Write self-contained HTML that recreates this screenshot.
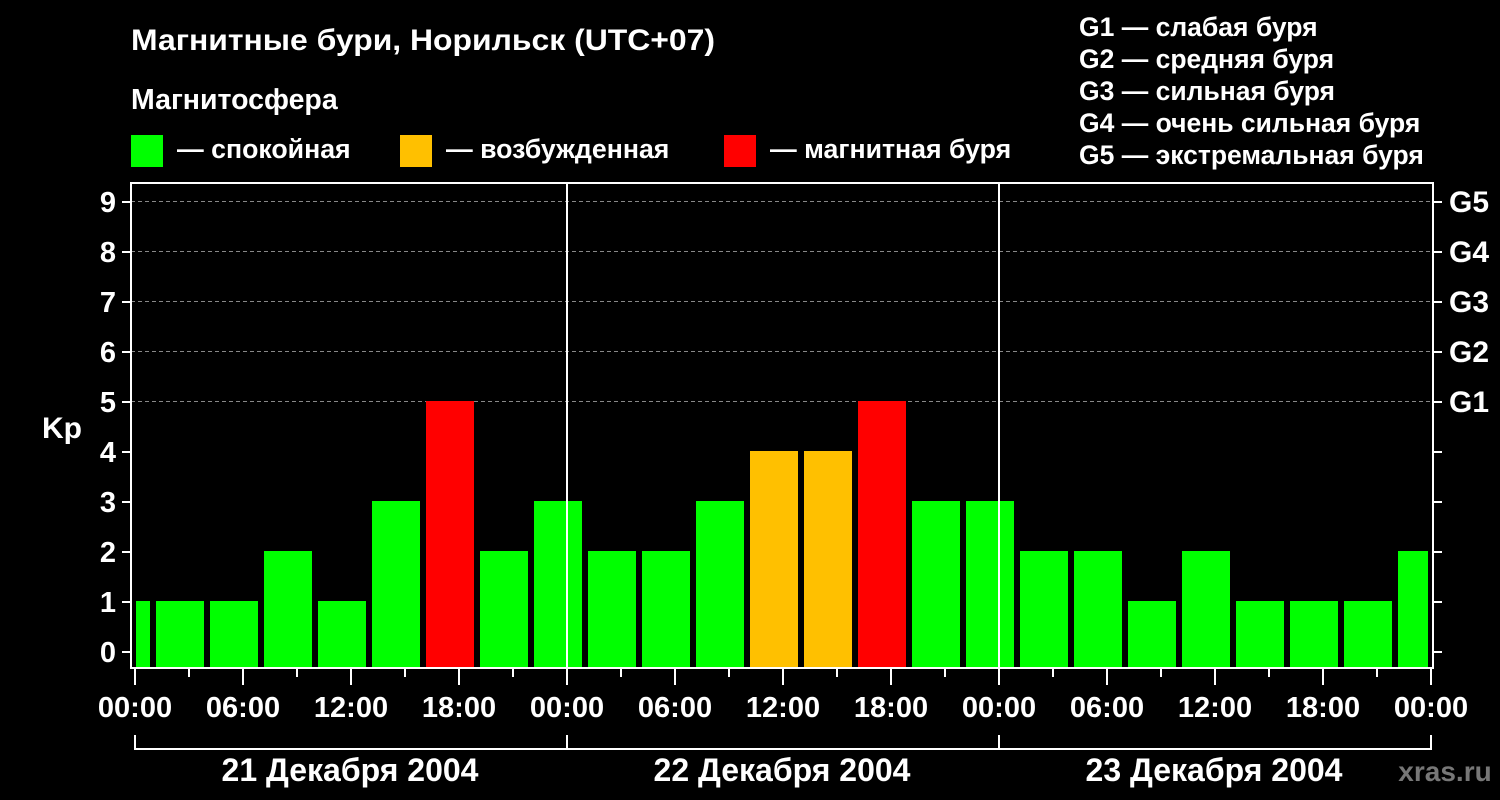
<!DOCTYPE html><html><head><meta charset="utf-8"><style>body{margin:0;background:#000}svg{display:block}text{font-family:"Liberation Sans",sans-serif;font-weight:bold;fill:#fff}</style></head><body>
<svg width="1500" height="800" viewBox="0 0 1500 800">
<rect width="1500" height="800" fill="#000"/>
<text x="131" y="50" font-size="30" textLength="584" lengthAdjust="spacingAndGlyphs">Магнитные бури, Норильск (UTC+07)</text>
<text x="131" y="109" font-size="28.5">Магнитосфера</text>
<rect x="131" y="135" width="32" height="32" fill="#00ff00"/><text x="177" y="158" font-size="26.7">— спокойная</text>
<rect x="400" y="135" width="32" height="32" fill="#ffc000"/><text x="446" y="158" font-size="26.7">— возбужденная</text>
<rect x="724" y="135" width="32" height="32" fill="#ff0000"/><text x="770" y="158" font-size="26.7">— магнитная буря</text>
<g font-size="26.5"><text x="1079" y="36">G1 — слабая буря</text><text x="1079" y="68">G2 — средняя буря</text><text x="1079" y="100">G3 — сильная буря</text><text x="1079" y="132">G4 — очень сильная буря</text><text x="1079" y="164">G5 — экстремальная буря</text></g>
<g stroke="#888" stroke-dasharray="4,3" stroke-width="1"><line x1="131" x2="1433" y1="201.5" y2="201.5"/><line x1="131" x2="1433" y1="251.5" y2="251.5"/><line x1="131" x2="1433" y1="301.5" y2="301.5"/><line x1="131" x2="1433" y1="351.5" y2="351.5"/><line x1="131" x2="1433" y1="401.5" y2="401.5"/></g>
<g fill="#00ff00">
<rect x="136" y="601" width="14" height="67"/><rect x="156" y="601" width="48" height="67"/><rect x="210" y="601" width="48" height="67"/><rect x="264" y="551" width="48" height="117"/><rect x="318" y="601" width="48" height="67"/><rect x="372" y="501" width="48" height="167"/>
<rect x="480" y="551" width="48" height="117"/><rect x="534" y="501" width="48" height="167"/><rect x="588" y="551" width="48" height="117"/><rect x="642" y="551" width="48" height="117"/><rect x="696" y="501" width="48" height="167"/>
<rect x="912" y="501" width="48" height="167"/><rect x="966" y="501" width="48" height="167"/><rect x="1020" y="551" width="48" height="117"/><rect x="1074" y="551" width="48" height="117"/><rect x="1128" y="601" width="48" height="67"/><rect x="1182" y="551" width="48" height="117"/><rect x="1236" y="601" width="48" height="67"/><rect x="1290" y="601" width="48" height="67"/><rect x="1344" y="601" width="48" height="67"/><rect x="1398" y="551" width="30" height="117"/>
</g>
<rect x="426" y="401" width="48" height="267" fill="#ff0000"/><rect x="858" y="401" width="48" height="267" fill="#ff0000"/>
<rect x="750" y="451" width="48" height="217" fill="#ffc000"/><rect x="804" y="451" width="48" height="217" fill="#ffc000"/>
<g stroke="#fff" stroke-width="2" fill="none">
<line x1="567" y1="183" x2="567" y2="668"/><line x1="999" y1="183" x2="999" y2="668"/>
<rect x="131" y="183" width="1302" height="485"/>
<path d="M122 652H131M122 602H131M122 552H131M122 502H131M122 452H131M122 402H131M122 352H131M122 302H131M122 252H131M122 202H131"/>
<path d="M1433 652H1442M1433 602H1442M1433 552H1442M1433 502H1442M1433 452H1442M1433 402H1442M1433 352H1442M1433 302H1442M1433 252H1442M1433 202H1442"/>
<path d="M135 669V685M243 669V685M351 669V685M459 669V685M567 669V685M675 669V685M783 669V685M891 669V685M999 669V685M1107 669V685M1215 669V685M1323 669V685M1431 669V685"/>
<path d="M189 669V677M297 669V677M405 669V677M513 669V677M621 669V677M729 669V677M837 669V677M945 669V677M1053 669V677M1161 669V677M1269 669V677M1377 669V677"/>
<path d="M135 735V749H1431V735M567 735V749M999 735V749"/>
</g>
<g font-size="29" text-anchor="end"><text x="116" y="662">0</text><text x="116" y="612">1</text><text x="116" y="562">2</text><text x="116" y="512">3</text><text x="116" y="462">4</text><text x="116" y="412">5</text><text x="116" y="362">6</text><text x="116" y="312">7</text><text x="116" y="262">8</text><text x="116" y="212">9</text></g>
<text x="42" y="438" font-size="30">Kp</text>
<g font-size="30"><text x="1449" y="212">G5</text><text x="1449" y="262">G4</text><text x="1449" y="312">G3</text><text x="1449" y="362">G2</text><text x="1449" y="412">G1</text></g>
<g font-size="29" text-anchor="middle"><text x="135" y="717">00:00</text><text x="243" y="717">06:00</text><text x="351" y="717">12:00</text><text x="459" y="717">18:00</text><text x="567" y="717">00:00</text><text x="675" y="717">06:00</text><text x="783" y="717">12:00</text><text x="891" y="717">18:00</text><text x="999" y="717">00:00</text><text x="1107" y="717">06:00</text><text x="1215" y="717">12:00</text><text x="1323" y="717">18:00</text><text x="1431" y="717">00:00</text>
<text x="350" y="781" font-size="32">21 Декабря 2004</text><text x="782" y="781" font-size="32">22 Декабря 2004</text><text x="1214" y="781" font-size="32">23 Декабря 2004</text></g>
<text x="1445" y="781" font-size="28" text-anchor="middle" style="fill:#777">xras.ru</text>
</svg></body></html>
